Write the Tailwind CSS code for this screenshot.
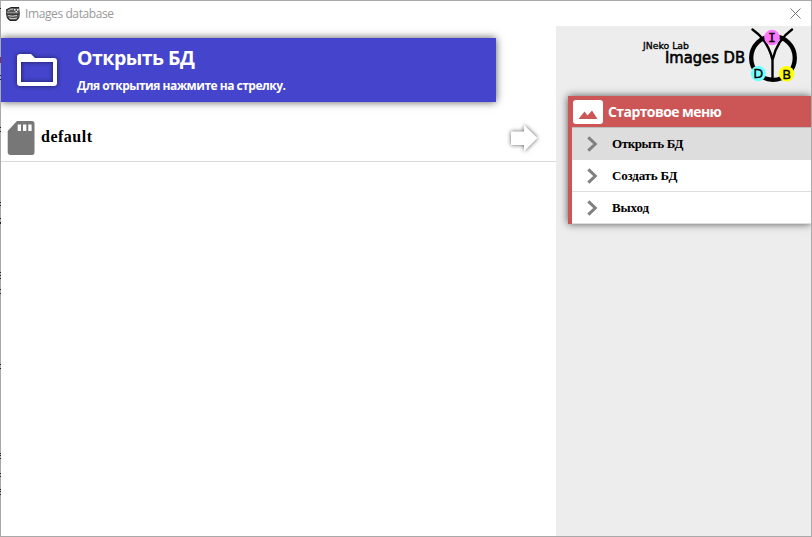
<!DOCTYPE html>
<html lang="ru">
<head>
<meta charset="utf-8">
<title>Images database</title>
<script src="https://cdn.jsdelivr.net/npm/@tailwindcss/browser@4"></script>
</head>
<body class="overflow-hidden bg-white">
<div class="relative flex h-[537px] w-[812px] flex-col border border-[#a9a9a9] bg-white font-['Open_Sans','Noto_Sans',sans-serif]">
  <header class="flex h-[25px] shrink-0 items-center pr-[10px] pl-1">
    <svg class="h-4 w-4" viewBox="0 0 16 16">
      <path d="M1 4Q3 1 14 1L15 7Q15 13 11 15H5Q1 13 1 7Z" fill="#555"/>
      <path d="M3 5Q5 3 8 3M2 7H13M3 9.500Q7 11 12 9.500M4 12Q8 13.500 12 12" stroke="#ccc" stroke-width="1" fill="none"/>
      <path d="M9 3h1.500v1.500H9zM12 3h1.500v1.500H12zM10.500 5h1.500v1h-1.500z" fill="#fff"/>
      <path d="M1 4L6 1.500H14M1 8H14M2 11L5 14.500H11L14 11" stroke="#222" fill="none"/>
    </svg>
    <span class="ml-1 text-[12px] leading-4 tracking-[-0.4px] whitespace-nowrap text-[#999]">Images database</span>
    <svg class="ml-auto h-[11px] w-[11px]" viewBox="0 0 11 11"><path d="M.5.5l10 10M10.500.5l-10 10" stroke="#777" stroke-width="1"/></svg>
  </header>
  <div class="flex min-h-0 flex-1">
    <main class="w-[555px] overflow-hidden pt-3">
      <section class="flex h-16 w-[495px] items-center bg-[#4444cc] text-white shadow-[0_0_8px_rgba(0,0,0,0.65)]">
        <svg class="ml-3 h-12 w-12 drop-shadow-[0_0_2px_rgba(0,0,0,0.6)]" viewBox="0 0 48 48"><path fill="#fff" fill-rule="evenodd" d="M7 8H18L22 12H41Q44 12 44 15V37Q44 40 41 40H7Q4 40 4 37V11Q4 8 7 8ZM8 16V36H40V16Z"/></svg>
        <div class="ml-4 whitespace-nowrap">
          <h1 class="-mt-0.5 text-[19.5px] leading-7 font-bold tracking-[-0.5px]">Открыть БД</h1>
          <p class="mt-1.5 text-[12px] leading-4 font-bold tracking-[-0.5px]">Для открытия нажмите на стрелку.</p>
        </div>
      </section>
      <div class="mt-3 flex h-12 items-center border-b border-[#dadada]">
        <svg class="ml-[6px] h-[34px] w-7" viewBox="0 0 28 34"><path d="M10 0H25Q27.500 0 27.500 3V31Q27.500 34 25 34H3.500Q.7 34 .7 31V10Z" fill="#777"/><path d="M10.700 3.500h3.300v6.500h-3.300zM16 3.500h3.300V10H16zM21.300 3.500h3.300V10h-3.300z" fill="#fff"/></svg>
        <span class="-mt-0.5 ml-[6px] font-['Liberation_Serif',serif] text-[16px] leading-5 font-bold tracking-[0.5px] text-black">default</span>
        <svg class="mr-[17px] ml-auto h-8 w-8 overflow-visible drop-shadow-[0_0_2px_rgba(0,0,0,0.65)]" viewBox="0 0 32 32"><path fill="#fff" d="M4 9.500H17V3L30.500 16L17 29.500V23H4Z"/></svg>
      </div>
    </main>
    <aside class="flex w-[255px] flex-col overflow-hidden bg-[#ededed]">
      <svg class="h-[70px] w-[255px] shrink-0" viewBox="556 26 255 70" font-family="DejaVu Sans, sans-serif">
        <text x="643" y="49" font-size="9.500" textLength="46" lengthAdjust="spacingAndGlyphs" stroke="#000" stroke-width=".35">JNeko Lab</text>
        <text x="665" y="63" font-size="15" textLength="80" lengthAdjust="spacingAndGlyphs" stroke="#000" stroke-width=".6">Images DB</text>
        <circle cx="773" cy="58" r="21.800" fill="none" stroke="#000" stroke-width="4.300"/>
        <path d="M752.500 29.500Q768 40 772.500 60V80M792 29.500Q777 40 772.500 60" fill="none" stroke="#000" stroke-width="2.400" stroke-linecap="round"/>
        <circle cx="772" cy="37.500" r="7.800" fill="#ff77ff"/><circle cx="758.300" cy="73.500" r="7.700" fill="#77ffff"/><circle cx="786.600" cy="73.800" r="7.700" fill="#ffff00"/>
        <g font-size="13" text-anchor="middle" stroke="#000" stroke-width=".3"><text x="771.800" y="41.700" font-family="DejaVu Sans Mono, monospace">I</text><text x="758.300" y="78">D</text><text x="786.700" y="79">B</text></g>
      </svg>
      <nav class="ml-3 h-32 w-[243px] shrink-0 border-l-4 border-[#cc5555] bg-white shadow-[0_0_8px_rgba(0,0,0,0.65)]">
        <div class="flex h-8 items-center border-b border-[#bdbdbd] bg-[#cc5555] text-white">
          <svg class="ml-px h-[24px] w-[30px]" viewBox="0 0 30 24"><rect width="30" height="24" rx="3" fill="#fff"/><path d="M5.500 19L11.500 11.500L14.500 15.500L19 10.500L24.500 19Z" fill="#cc5555"/></svg>
          <h2 class="ml-[5px] text-[14px] leading-5 font-bold tracking-[-0.58px] whitespace-nowrap">Стартовое меню</h2>
        </div>
        <ul class="font-['Liberation_Serif',serif] text-[13px] leading-4 font-bold text-black">
          <li class="flex h-8 items-center border-b border-[#dddddd] bg-[#dddddd]"><svg class="ml-[15px] h-4 w-[11px]" viewBox="0 0 11 16"><path d="M1.300 1.300L8.300 8L1.300 14.700" fill="none" stroke="#808080" stroke-width="3"/></svg><span class="ml-[14px] tracking-[-0.4px]">Открыть БД</span></li>
          <li class="flex h-8 items-center border-b border-[#dddddd]"><svg class="ml-[15px] h-4 w-[11px]" viewBox="0 0 11 16"><path d="M1.300 1.300L8.300 8L1.300 14.700" fill="none" stroke="#808080" stroke-width="3"/></svg><span class="ml-[14px] tracking-[-0.2px]">Создать БД</span></li>
          <li class="flex h-8 items-center border-b border-[#dddddd]"><svg class="ml-[15px] h-4 w-[11px]" viewBox="0 0 11 16"><path d="M1.300 1.300L8.300 8L1.300 14.700" fill="none" stroke="#808080" stroke-width="3"/></svg><span class="ml-[14px] tracking-[-0.1px]">Выход</span></li>
        </ul>
      </nav>
    </aside>
  </div>
  <svg class="absolute -top-px -left-px h-[537px] w-px" viewBox="0 0 1 537"><path d="M.5 8v1M.5 75v1M.5 79v1M.5 127v1M.5 131v1M.5 202v1M.5 205v1M.5 218v1M.5 222v2M.5 272v1M.5 275v1M.5 278v1M.5 289v1M.5 293v1M.5 364v1M.5 368v1M.5 453v1M.5 455v1M.5 458v1M.5 473v1M.5 476v1M.5 489v1M.5 491v1M.5 494v1" stroke="#222"/><path d="M.5 57v6" stroke="#833"/></svg>
</div>
</body>
</html>
